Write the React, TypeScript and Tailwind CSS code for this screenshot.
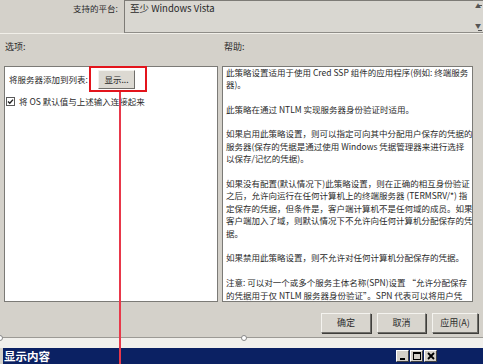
const helpLines: string[] = [
	'此策略设置适用于使用 Cred SSP 组件的应用程序(例如: 终端服务',
	'器)。',
	'',
	'此策略在通过 NTLM 实现服务器身份验证时适用。',
	'',
	'如果启用此策略设置，则可以指定可向其中分配用户保存的凭据的',
	'服务器(保存的凭据是通过使用 Windows 凭据管理器来进行选择',
	'以保存/记忆的凭据)。',
	'',
	'如果没有配置(默认情况下)此策略设置，则在正确的相互身份验证',
	'之后，允许向运行在任何计算机上的终端服务器 (TERMSRV/*) 指',
	'定保存的凭据，但条件是，客户端计算机不是任何域的成员。如果',
	'客户端加入了域，则默认情况下不允许向任何计算机分配保存的凭',
	'据。',
	'',
	'如果禁用此策略设置，则不允许对任何计算机分配保存的凭据。',
	'',
	'注意: 可以对一个或多个服务主体名称(SPN)设置 “允许分配保存',
	'的凭据用于仅 NTLM 服务器身份验证”。SPN 代表可以将用户凭',
]

const DialogButton = ({ label, width }: { label: string; width: string }) => (
	<div
		className={`${width} flex h-[20px] items-center justify-center border border-t-[#f4f3ef] border-l-[#f4f3ef] border-r-[#6f6e6a] border-b-[#6f6e6a] bg-[#d8d5ce] text-[9px] shadow-[1px_1px_0_#3f3e3b]`}
	>
		{label}
	</div>
)

const CaptionButton = ({ children }: { children: React.ReactNode }) => (
	<div className="flex h-[12px] w-[13px] items-center justify-center border border-t-white border-l-white border-r-[#404040] border-b-[#404040] bg-[#d4d0c8]">
		{children}
	</div>
)

export default function App() {
	return (
		<div className="relative h-[364px] w-[483px] overflow-hidden bg-[#d4d1ca] font-['Noto_Sans_CJK_SC','Noto_Sans',sans-serif] text-[9px] leading-[12.5px] text-[#2a2a2a]">
			{/* platform row */}
			<div className="flex h-[33px]">
				<div className="w-[124px] pl-[73px] pt-[2px] text-[8.5px]">支持的平台:</div>
				<div className="relative flex-1 border border-r-0 border-t-[#7d7b76] border-l-[#7d7b76] border-b-[#8f8d88] bg-[#d9d7d1] pl-[5px] pt-[1px] text-[9.5px]">
					至少 Windows Vista
					<div className="absolute top-[4px] right-[1px] h-px w-[4px] bg-[#555]" />
					<div className="absolute top-[2px] right-[2px] text-[6px] leading-[6px] text-[#555]">▲</div>
					<div className="absolute top-[22px] right-[2px] text-[6px] leading-[6px] text-[#555]">▼</div>
					<div className="absolute top-[29px] right-[1px] h-px w-[4px] bg-[#555]" />
				</div>
			</div>
			<div className="h-px bg-[#f1efe9]" />

			{/* labels */}
			<div className="flex h-[32px] pt-[7px]">
				<div className="w-[224px] pl-[5px]">选项:</div>
				<div>帮助:</div>
			</div>

			{/* panels */}
			<div className="flex h-[236px] gap-[4px] pl-[4px]">
				<div className="w-[214px] border border-[#7b7a76] bg-white text-[8.5px]">
					<div className="flex items-center pt-[3px] pl-[4px]">
						<span className="w-[89px] whitespace-nowrap">将服务器添加到列表:</span>
						<div className="flex h-[19px] w-[37px] items-center justify-center border border-t-[#f4f3ef] border-l-[#f4f3ef] border-r-[#6f6e6a] border-b-[#6f6e6a] bg-[#dcd9d2]">
							显示...
						</div>
					</div>
					<div className="mt-[6px] flex items-center gap-[4px] pl-[1px]">
						<div className="flex h-[9px] w-[9px] items-center justify-center border border-[#5a5a5a] bg-white">
							<svg width="7" height="7" viewBox="0 0 7 7">
								<path d="M1 3.5 L2.8 5.3 L6 1.6" fill="none" stroke="#222" strokeWidth="1.4" />
							</svg>
						</div>
						<span>将 OS 默认值与上述输入连接起来</span>
					</div>
				</div>
				<div className="w-[251px] overflow-hidden border border-[#7b7a76] bg-white pl-[3px] text-[8.5px]">
					<div className="-mt-[1.5px]">
						{helpLines.map((line, i) => (
							<div key={i} className="h-[12.4px] leading-[12.4px] whitespace-nowrap">
								{line}
							</div>
						))}
					</div>
				</div>
			</div>

			{/* dialog buttons */}
			<div className="mt-[11px] flex justify-end gap-[6px] pr-[5px]">
				<DialogButton label="确定" width="w-[50px]" />
				<DialogButton label="取消" width="w-[49px]" />
				<DialogButton label="应用(A)" width="w-[46px]" />
			</div>

			<div className="mt-[4px] h-px bg-[#9c9a95]" />
			<div className="h-[10px] bg-[#f1f0ec]" />

			{/* second window title bar */}
			<div className="ml-[3px] flex h-[16px] items-center justify-between bg-[#0b2163] pl-[1px] pr-[46px]">
				<span className="text-[11.5px] leading-[16px] font-bold text-white">显示内容</span>
				<div className="flex gap-[1px]">
					<CaptionButton>
						<div className="mt-[6px] h-[2px] w-[5px] bg-black" />
					</CaptionButton>
					<CaptionButton>
						<div className="h-[8px] w-[8px] border border-t-2 border-black" />
					</CaptionButton>
					<CaptionButton>
						<svg width="8" height="8" viewBox="0 0 8 8">
							<path d="M1 1 L7 7 M7 1 L1 7" stroke="black" strokeWidth="1.8" />
						</svg>
					</CaptionButton>
				</div>
			</div>

			{/* annotation overlay */}
			<div className="absolute top-[66px] left-[89px] h-[26px] w-[58px] border-[2.5px] border-[#e3141c]" />
			<div className="absolute top-[92px] left-[119px] h-[272px] w-[1.5px] bg-[#e8384a]" />
			<div className="absolute top-[335px] left-[-3px] h-[6px] w-[6px] rounded-full border border-[#888] bg-white" />
			<div className="absolute top-[335px] left-[241px] h-[6px] w-[6px] rounded-full border border-[#888] bg-white" />
		</div>
	)
}
